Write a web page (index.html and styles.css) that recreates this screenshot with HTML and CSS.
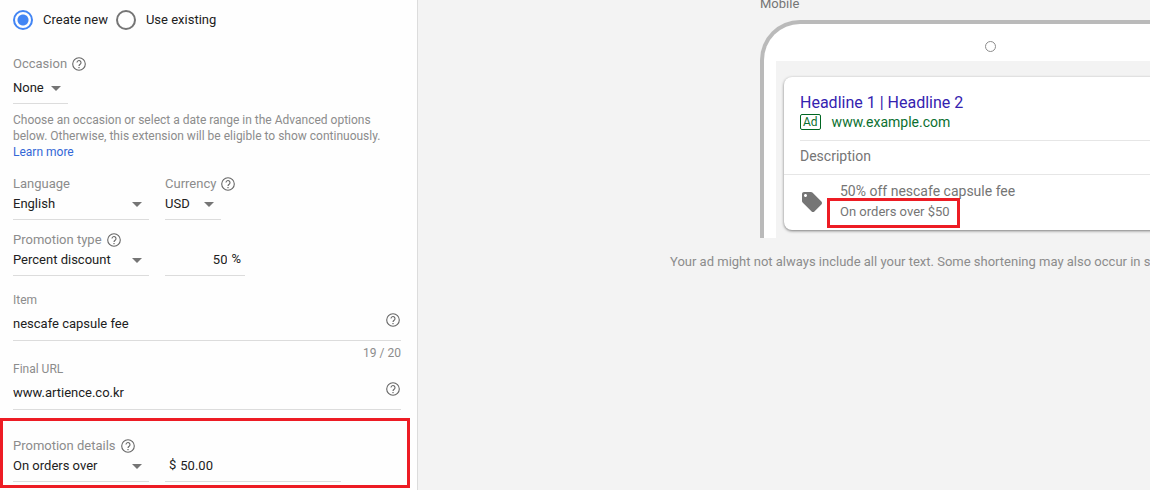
FILE: index.html
```html
<!DOCTYPE html>
<html lang="en">
<head>
    <meta charset="UTF-8">
    <meta name="viewport" content="width=device-width, initial-scale=1.0">
    <title>Promotion extension</title>
    <link rel="stylesheet" href="styles.css">
</head>
<body>
    <svg class="sprite" aria-hidden="true">
        <symbol id="help" viewBox="0 0 14 14">
            <circle cx="7" cy="7" r="6.3" fill="none" stroke="currentColor" stroke-width="1.1"/>
            <path d="M5 5.6a2 2 0 1 1 3.3 1.5C7.5 7.7 7 8 7 9" fill="none" stroke="currentColor" stroke-width="1.1"/>
            <rect x="6.4" y="10" width="1.2" height="1.2" fill="currentColor"/>
        </symbol>
    </svg>
    <div class="page">
        <form class="editor">
            <div class="modes">
                <label class="mode"><input type="radio" name="mode" checked>Create new</label>
                <label class="mode"><input type="radio" name="mode">Use existing</label>
            </div>

            <div class="field occasion">
                <div class="caption">
                    <label for="occasion">Occasion</label>
                    <svg class="help"><use href="#help"/></svg>
                </div>
                <div class="select select-tiny">
                    <select id="occasion"><option>None</option></select>
                </div>
            </div>
            <p class="hint">Choose an occasion or select a date range in the Advanced options below. Otherwise, this extension will be eligible to show continuously. <a href="#">Learn more</a></p>

            <div class="row row-language">
                <div class="field">
                    <div class="caption"><label for="language">Language</label></div>
                    <div class="select select-wide">
                        <select id="language"><option>English</option></select>
                    </div>
                </div>
                <div class="field">
                    <div class="caption">
                        <label for="currency">Currency</label>
                        <svg class="help"><use href="#help"/></svg>
                    </div>
                    <div class="select select-small">
                        <select id="currency"><option>USD</option></select>
                    </div>
                </div>
            </div>

            <div class="row row-type">
                <div class="field">
                    <div class="caption">
                        <label for="type">Promotion type</label>
                        <svg class="help"><use href="#help"/></svg>
                    </div>
                    <div class="select select-wide">
                        <select id="type"><option>Percent discount</option></select>
                    </div>
                </div>
                <div class="amount percent">
                    <input type="text" id="percent" value="50" aria-label="Percent">
                    <label for="percent">%</label>
                </div>
            </div>

            <div class="field item">
                <div class="caption"><label for="item">Item</label></div>
                <div class="text">
                    <input type="text" id="item" value="nescafe capsule fee">
                    <svg class="help"><use href="#help"/></svg>
                </div>
                <div class="counter">19 / 20</div>
            </div>

            <div class="field">
                <div class="caption"><label for="url">Final URL</label></div>
                <div class="text">
                    <input type="text" id="url" value="www.artience.co.kr">
                    <svg class="help"><use href="#help"/></svg>
                </div>
            </div>

            <div class="row details">
                <div class="field">
                    <div class="caption">
                        <label for="details">Promotion details</label>
                        <svg class="help"><use href="#help"/></svg>
                    </div>
                    <div class="select select-wide">
                        <select id="details"><option>On orders over</option></select>
                    </div>
                </div>
                <div class="amount money">
                    <label for="money">$</label>
                    <input type="text" id="money" value="50.00" aria-label="Order amount">
                </div>
            </div>
        </form>

        <div class="preview">
            <div class="stage">
                <div class="device">
                    <div class="device-name">Mobile</div>
                    <div class="phone">
                        <div class="camera"></div>
                        <div class="screen">
                            <div class="ad">
                                <div class="ad-top">
                                    <div class="headline">Headline 1 | Headline 2</div>
                                    <div class="site"><span class="badge">Ad</span>www.example.com</div>
                                </div>
                                <div class="description">Description</div>
                                <div class="promo">
                                    <svg class="tag" viewBox="0 0 24 24"><path fill="currentColor" d="M21.4 11.6l-9-9C12 2.2 11.5 2 11 2H4c-1.100 0-2 .9-2 2v7c0 .6.2 1.100.6 1.400l9 9c.4.4.9.6 1.400.6s1.100-.2 1.400-.6l7-7c.4-.4.6-.9.6-1.400s-.2-1.100-.6-1.400zM5.500 7C4.700 7 4 6.300 4 5.500S4.700 4 5.500 4 7 4.700 7 5.500 6.300 7 5.500 7z"/></svg>
                                    <div>
                                        <div class="promo-title">50% off nescafe capsule fee</div>
                                        <span class="promo-terms">On orders over $50</span>
                                    </div>
                                </div>
                            </div>
                        </div>
                    </div>
                </div>
                <p class="note">Your ad might not always include all your text. Some shortening may also occur in some formats.</p>
            </div>
        </div>
    </div>
</body>
</html>
```
FILE: styles.css
```css
* {
    box-sizing: border-box;
}
body {
    margin: 0;
    font-family: Roboto, "Liberation Sans", sans-serif;
    font-size: 13px;
    line-height: 16px;
    color: #212121;
    background: #f3f3f3;
    overflow: hidden;
}
p {
    margin: 0;
}
.sprite {
    display: none;
}
.page {
    display: flex;
    min-height: 100vh;
}

/* form */
.editor {
    flex: 0 0 418px;
    padding-top: 10px;
    background: #fefefe;
    border-right: 1px solid #dcdcdc;
}
.modes {
    display: flex;
    gap: 8px;
    padding: 0 13px;
}
.mode {
    display: flex;
    align-items: center;
    gap: 10px;
}
.mode input {
    appearance: none;
    width: 20px;
    height: 20px;
    margin: 0;
    border: 2px solid #757575;
    border-radius: 50%;
}
.mode input:checked {
    border-color: #4285f4;
    background: radial-gradient(circle, #4285f4 5px, transparent 6px);
}
.field {
    padding: 0 16px 0 13px;
}
.row {
    display: flex;
    align-items: flex-end;
    gap: 16px;
    padding: 0 16px 0 13px;
}
.row .field {
    padding: 0;
}
.caption {
    display: flex;
    align-items: center;
    gap: 5px;
    margin-bottom: 2px;
    color: #8c8c8c;
}
.help {
    flex: none;
    width: 14px;
    height: 14px;
    color: #666;
}
.occasion {
    margin-top: 26px;
}
.occasion .caption {
    margin-bottom: 6px;
}
.select {
    display: grid;
    align-items: center;
    border-bottom: 1px solid #dcdcdc;
    padding-bottom: 5px;
}
.select select,
.select::after {
    grid-area: 1 / 1;
}
.select::after {
    content: "";
    justify-self: end;
    margin-right: 7px;
    border: 5px solid transparent;
    border-top-color: #757575;
    border-bottom: 0;
    pointer-events: none;
}
.select-tiny {
    width: 55px;
}
.select-small {
    width: 56px;
}
.select-wide {
    width: 136px;
}
select,
input[type="text"] {
    appearance: none;
    width: 100%;
    height: 20px;
    margin: 0;
    padding: 0;
    border: 0;
    outline: 0;
    background: none;
    font: inherit;
    color: inherit;
}
.hint {
    padding: 0 32px 0 13px;
    margin-top: 8px;
    font-size: 12px;
    color: #8c8c8c;
}
.hint a {
    display: block;
    color: #3367d6;
    text-decoration: none;
}
.row-language {
    margin-top: 16px;
}
.row-type {
    margin-top: 12px;
}
.amount {
    display: flex;
    align-items: center;
    gap: 4px;
    border-bottom: 1px solid #dcdcdc;
    padding: 0 4px 6px;
}
.percent {
    width: 80px;
}
.percent input {
    text-align: right;
}
.money {
    width: 176px;
}
.item {
    margin-top: 16px;
}
.item .caption,
.item + .field .caption {
    margin-bottom: 0;
    font-size: 12px;
}
.text {
    display: flex;
    margin-top: 5px;
    border-bottom: 1px solid #dcdcdc;
    padding: 0 1px 7px 0;
}
.counter {
    margin-top: 4px;
    text-align: right;
    font-size: 12px;
    color: #8c8c8c;
}
.details {
    margin: 8px 7px 0 0;
    padding: 17px 0 3px 10px;
    border: 3px solid #ed1c24;
}

/* preview */
.preview {
    flex: 1;
    min-width: 0;
    padding-left: 252px;
    overflow: hidden;
}
.stage {
    width: 640px;
    color: #757575;
}
.device {
    width: 460px;
    margin: -4px auto 0;
}
.phone {
    margin-top: 8px;
    padding: 17px 12px 0;
    border: 4px solid #bababa;
    border-bottom: 0;
    border-radius: 40px 40px 0 0;
    background: #fff;
}
.camera {
    width: 11px;
    height: 11px;
    margin: 0 auto 9px;
    border: 1px solid #8c8c8c;
    border-radius: 50%;
}
.screen {
    padding: 16px 8px 8px;
    background: #f3f3f3;
}
.ad {
    border-radius: 8px;
    background: #fff;
    box-shadow: 0 1px 3px rgba(0, 0, 0, 0.5);
    font-size: 14px;
}
.ad-top {
    margin-left: 16px;
    padding: 16px 0 9px;
    border-bottom: 1px solid #e6e6e6;
}
.headline {
    line-height: 20px;
    font-size: 16px;
    color: #3422b0;
}
.site {
    display: flex;
    align-items: center;
    gap: 11px;
    height: 18px;
    color: #0b7030;
}
.badge {
    padding: 0 2px;
    border: 1px solid #006621;
    border-radius: 2px;
    font-size: 12px;
    line-height: 14px;
}
.description {
    padding: 7px 16px 10px;
    border-bottom: 1px solid #e6e6e6;
}
.promo {
    display: flex;
    gap: 16px;
    padding: 8px 16px 10px;
}
.tag {
    width: 24px;
    height: 24px;
    margin-top: 7px;
}
.promo-title {
    margin-bottom: 5px;
}
.promo-terms {
    display: block;
    position: relative;
    width: fit-content;
    font-size: 13px;
}
.promo-terms::after {
    content: "";
    position: absolute;
    inset: -6px -10px -8px -13px;
    border: 3px solid #ed1c24;
}
.note {
    margin-top: 16px;
    color: #8c8c8c;
    white-space: nowrap;
}
```
